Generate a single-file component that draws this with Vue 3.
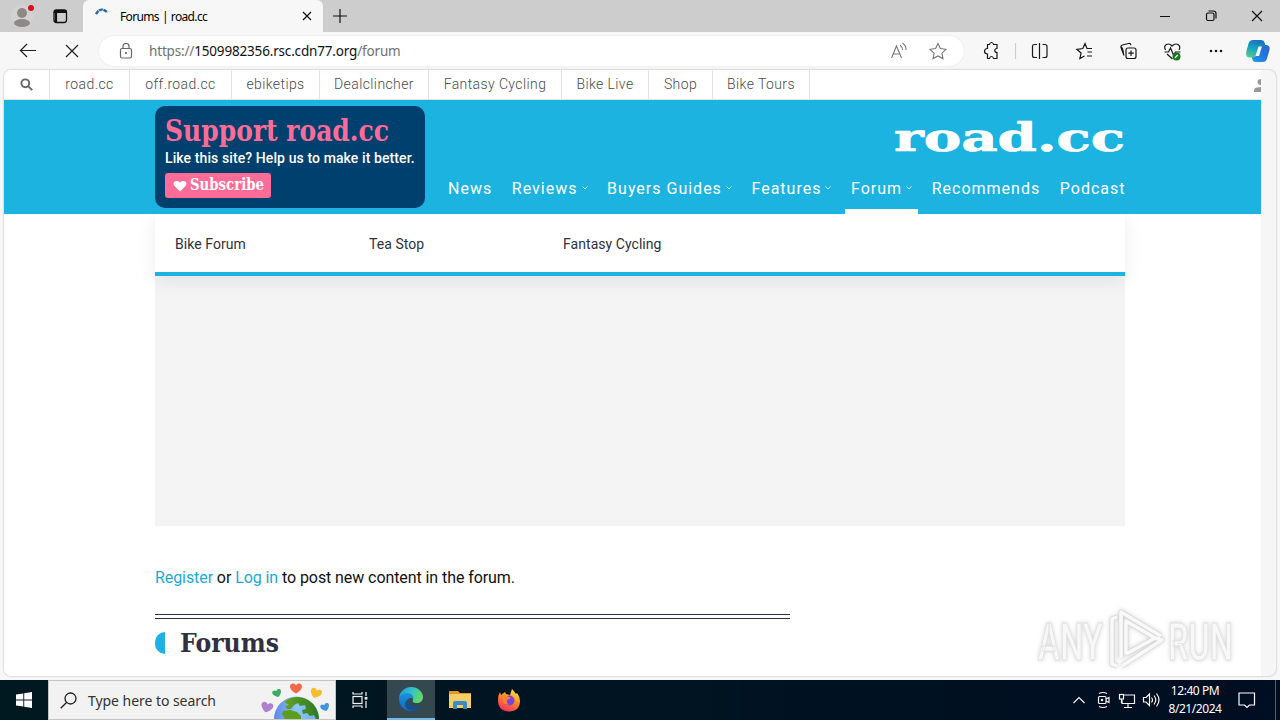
<template>
  <div class="screen">
    <div class="tab-strip">
      <svg class="profile" width="83" height="32" viewBox="0 0 83 32" fill="none">
        <circle cx="22" cy="16" r="11" fill="#d4d2d0" />
        <circle cx="22" cy="13" r="5" fill="#8e8986" />
        <ellipse cx="22" cy="23" rx="8" ry="4" fill="#8e8986" />
        <circle cx="31" cy="8" r="3" fill="#e00b1c" />
        <rect x="54" y="10" width="12.5" height="12.5" rx="2.5" stroke="#111" stroke-width="1.3" />
        <path d="M54 11.500h12.500" stroke="#111" stroke-width="3" />
        <path d="M56 11v11" stroke="#111" stroke-width="2.2" />
      </svg>
      <div class="tab">
        <svg width="16" height="16" viewBox="0 0 16 16" fill="none">
          <path d="M1 6Q6-2 12.500 4.500" stroke="#2868a4" stroke-width="2.4" stroke-dasharray="4 .6" />
        </svg>
        <span class="tab-title">Forums | road.cc</span>
        <svg width="10" height="10" viewBox="0 0 10 10" stroke="#111" stroke-width="1.2"><path d="M1 1l8 8M9 1L1 9" /></svg>
      </div>
      <svg class="new-tab" width="14" height="14" viewBox="0 0 14 14" stroke="#111" stroke-width="1.2"><path d="M7 0v14M0 7h14" /></svg>
      <svg class="window-buttons" width="120" height="32" viewBox="0 0 120 32" fill="none" stroke="#111" stroke-width="1.2">
        <path d="M0 16.5h10M92 11l10 10M102 11L92 21" />
        <rect x="46.5" y="13" width="7.5" height="7.5" rx="1.5" />
        <path d="M48.5 11h5a2.500 2.500 0 0 1 2.500 2.500v5" />
      </svg>
    </div>

    <div class="toolbar">
      <svg class="nav-buttons" width="99" height="37" viewBox="0 0 99 37" fill="none" stroke="#222" stroke-width="1.2">
        <path d="M36 18.5H20.5M27 12l-6.5 6.5L27 25M66 13l12 12M78 13L66 25" />
      </svg>
      <div class="address">
        <svg width="14" height="16" viewBox="0 0 14 16" fill="none" stroke="#686868" stroke-width="1.2">
          <rect x="1.5" y="5.5" width="11" height="9.5" rx="1.5" /><path d="M4 5.500V3.500a3 3 0 0 1 6 0v2" /><circle cx="7" cy="10" r=".5" />
        </svg>
        <span class="url">https://<b>1509982356.rsc.cdn77.org</b>/forum</span>
        <svg width="62" height="20" viewBox="0 0 62 20" fill="none" stroke="#777" stroke-width="1.1">
          <path d="M1.500 17L6.500 5l5 12M3.500 13h6M10 4q2.500 2 2.500 5M12.500 2q4 3 3.500 7" />
          <path d="M48 2.500l2.400 5.100 5.600.7-4.100 3.800 1.100 5.500-5-2.700-5 2.700 1.100-5.500L40 8.300l5.600-.7z" />
        </svg>
      </div>
      <svg width="316" height="37" viewBox="964 32 316 37" fill="none" stroke="#181818" stroke-width="1.200">
        <path d="M987.500 44.500h2q.3-2 2-2t2 2h3.500v4q-2.200 0-2.200 2t2.200 2v6h-3.500q-.3-2-2-2t-2 2h-2V54q-3-.2-3-2.800t3-2.700z" />
        <path d="M1015.500 43v16" stroke="#cfcfcf" />
        <path d="M1037 44.500h-2.500q-2 0-2 2v9q0 2 2 2h2.500M1042.500 44.500h2.500q2 0 2 2v9q0 2-2 2h-2.500M1039.500 43v16" />
        <path d="M1092 48.500h-5l-2-5-2.200 5-6 .8 4.300 3.700-1.200 5.500 4.600-2.500M1087.500 52h4.500M1087 56h5" />
        <rect x="1126" y="48" width="10" height="10.500" rx="2" /><path d="M1131 50.500v5.500M1128.300 53.200h5.500M1124 55.500l-3-8q-.5-2 1.500-2.500l6-1.500q2-.4 2.500 1.500M1121 47q2 0 2.500 7" />
        <path d="M1165.500 50q-2-4 1-5.500 3-1.500 5.500 1.500 3-3 6-1.500 3 2 1 5.500M1167 54l5.500 5M1164.500 52h4l2-4 3 7 2-3h5" />
        <circle cx="1176.500" cy="56.500" r="4" fill="#16781b" stroke="none" /><path d="M1174.800 58l3-3" stroke="#fff" />
        <g fill="#181818" stroke="none"><circle cx="1211" cy="51" r="1.300" /><circle cx="1216" cy="51" r="1.300" /><circle cx="1221" cy="51" r="1.300" /></g>
        <g stroke="none">
          <path d="M1261 45h4.500q5 0 4 5l-2.500 8.500q-1 3.500-4.500 3.500h-7q-2.500 0-3.300-3l-.7-3h4z" fill="url(#copilotB)" />
          <path d="M1253 40h8.500q2.500 0 3.200 2.800l.8 3.200h-3q-3 0-4 3l-2 6q-.8 2.500-3.500 2.500h-3q-5 0-3.700-5.500l2.200-8.500q1-3.500 4.500-3.500z" fill="url(#copilotA)" />
          <path d="M1258.500 46.500h3.500l-3 9.500h-3.500z" fill="#f7fbfb" />
        </g>
        <defs>
          <linearGradient id="copilotA" x1="0.3" y1="0" x2="0" y2="1"><stop stop-color="#1878bd" /><stop offset=".45" stop-color="#19a6c0" /><stop offset="1" stop-color="#5fcf80" /></linearGradient>
          <linearGradient id="copilotB" x1="1" y1="0" x2="0" y2="1"><stop stop-color="#2467cf" /><stop offset=".5" stop-color="#2277e0" /><stop offset="1" stop-color="#1aa0f0" /></linearGradient>
        </defs>
      </svg>
    </div>

    <div class="viewport">
      <div class="page">
        <nav class="network">
          <div class="search-cell">
            <svg width="13" height="13" viewBox="0 0 13 13" fill="none" stroke="#666" stroke-width="1.900"><circle cx="5.300" cy="5.300" r="3.900" /><path d="M8.200 8.200l4 4" /></svg>
          </div>
          <a v-for="site in sites" :key="site.name" :style="{ width: site.width + 'px' }">{{ site.name }}</a>
          <svg class="user" width="8" height="13" viewBox="0 0 8 13" fill="#999"><path d="M8 0v6Q4.500 6 4.500 3T8 0zM8 8v5H1V11q0-2 3-2.500z" /></svg>
        </nav>

        <header class="site-header">
          <div class="wrap header-row">
            <section class="support">
              <svg class="support-title" width="226" height="36"><text x="0" y="28" textLength="224" lengthAdjust="spacingAndGlyphs">Support road.cc</text></svg>
              <p>Like this site? Help us to make it better.</p>
              <button>
                <svg width="14" height="12" viewBox="0 0 14 12" fill="#fff"><path d="M7 11.500L1.500 6C-.2 4.200.5 1.200 3.300 1 5 .9 6.200 1.600 7 2.600 7.800 1.600 9 .9 10.700 1c2.800.2 3.500 3.200 1.800 5z" /></svg>
                <svg class="subscribe" width="76" height="25"><text x="0" y="17" textLength="74" lengthAdjust="spacingAndGlyphs">Subscribe</text></svg>
              </button>
            </section>
            <div class="header-right">
              <svg class="logo" width="231" height="44"><text x="0" y="36" textLength="231" lengthAdjust="spacingAndGlyphs">road.cc</text></svg>
              <nav class="main-nav">
                <a v-for="item in menu" :key="item.name" :class="{ active: item.active }">
                  {{ item.name }}<svg v-if="item.more" width="6" height="4" viewBox="0 0 6 4" fill="none" stroke="#cff4ff"><path d="M.5.5L3 3 5.500.5" /></svg>
                </a>
              </nav>
            </div>
          </div>
        </header>

        <div class="wrap submenu">
          <a v-for="link in forumLinks" :key="link">{{ link }}</a>
        </div>
        <div class="wrap ad-slot"></div>
        <main class="wrap">
          <p class="login"><a>Register</a> or <a>Log in</a> to post new content in the forum.</p>
          <div class="title">
            <i></i>
            <svg width="101" height="40"><text x="0" y="29" textLength="99" lengthAdjust="spacingAndGlyphs">Forums</text></svg>
          </div>
        </main>
      </div>
      <svg class="watermark" width="204" height="70" viewBox="1034 606 204 70">
        <g class="wm-text">
          <text x="1038" y="660" textLength="65" lengthAdjust="spacingAndGlyphs">ANY</text>
          <text x="1168" y="660" textLength="65" lengthAdjust="spacingAndGlyphs">RUN</text>
        </g>
        <g fill="none" stroke-linejoin="round">
          <path v-for="line in watermarkLines" :key="line.color" d="M1117 617l-5 2v45l5 2M1121 658v-46l40 24M1126 654v-33l29 17 7 2-40 26M1126 654l29-16" :stroke="line.color" :stroke-width="line.width" />
        </g>
      </svg>
    </div>

    <div class="taskbar">
      <div class="start">
        <svg width="16" height="16" viewBox="0 0 16 16" fill="#fff"><path d="M0 2.500l7.300-1v6H0zM8.200 1.300L16 0v7.500H8.200zM0 8.500h7.300v6L0 13.500zM8.200 8.500H16V16l-7.800-1.300z" /></svg>
      </div>
      <div class="search">
        <svg width="17" height="17" viewBox="0 0 17 17" fill="none" stroke="#202020" stroke-width="1.300"><circle cx="10.500" cy="6.500" r="5.500" /><path d="M6.500 10.500L.7 16.300" /></svg>
        <span>Type here to search</span>
        <svg class="globe" width="72" height="38" viewBox="260 681 72 38">
          <defs>
            <linearGradient id="sea"><stop stop-color="#5d86e8" /><stop offset=".5" stop-color="#8cc6fb" /><stop offset="1" stop-color="#6aaeea" /></linearGradient>
            <linearGradient id="land"><stop stop-color="#67a31f" /><stop offset="1" stop-color="#2f7a22" /></linearGradient>
          </defs>
          <circle cx="296.500" cy="719" r="22.500" fill="url(#sea)" />
          <path d="M284 702q6-5 14-5 12 1 18 11 3 5 3 11h-3l-2-4-4 1-3-3-4 1-1-4 4-1-1-4-5 1-2-3-4 2-3 4-4 0-2-3 4-1z" fill="url(#land)" />
          <path d="M283 711l7-1 7 2 4 4v3h-16l-3-5z" fill="#5c9c1f" />
          <path v-for="heart in hearts" :key="heart.color" d="M0 5.500C-3 4-6 1-6-1.500-6-5-1.500-5.500 0-2.500 1.500-5.500 6-5 6-1.500 6 1 3 4 0 5.500z" :fill="heart.color" :transform="heart.at" />
        </svg>
      </div>
      <div class="app task-view">
        <svg width="18" height="18" viewBox="0 0 18 18" fill="none" stroke="#f4f4f4" stroke-width="1.200"><rect x="2" y="5.500" width="9" height="7" /><path d="M2 1v2h9V1M2 17v-2h9v2M15 1v4M15 10v7" /><rect x="14.300" y="6.500" width="1.500" height="1.500" /></svg>
      </div>
      <div class="app edge">
        <svg width="24" height="24" viewBox="0 0 24 24">
          <defs>
            <linearGradient id="edgeTop" y2=".4"><stop stop-color="#1f8fd6" /><stop offset=".5" stop-color="#2fc0cf" /><stop offset="1" stop-color="#62d868" /></linearGradient>
            <linearGradient id="edgeSide" x2="0" y2="1"><stop stop-color="#1b93dc" /><stop offset="1" stop-color="#1266be" /></linearGradient>
          </defs>
          <path d="M0 11C1 4 6 0 12 0c7 0 12 5 12 10 0 4-3 6-6 6-4 0-5-1-4-3 1-4-2-6-5-6-4 0-7 1-9 4z" fill="url(#edgeTop)" />
          <path d="M0 11c1-3 5-5 8-5 4 0 7 3 6 6-2-2-5-1-5 2 0 5 4 8 9 8q-3 2-6 2C5 24 0 19 0 11z" fill="url(#edgeSide)" />
          <path d="M10 11.500c-3 5 1 8.500 6 8 3 0 5-1 6-2-3 6-9 7.500-13 5-4-3-4-8 1-11z" fill="#14508f" />
        </svg>
      </div>
      <div class="app">
        <svg width="22" height="20" viewBox="0 0 22 20"><path d="M0 1h9l2 2h11v15H0z" fill="#dc982c" /><path d="M0 4h22v14H0z" fill="#f7cd68" /><path d="M4 19v-6q0-2 2-2h10q2 0 2 2v6h-4v-4H8v4z" fill="#388bc8" /></svg>
      </div>
      <div class="app">
        <svg width="24" height="24" viewBox="0 0 24 24">
          <defs><linearGradient id="fox" x1=".8" y1="0" x2=".3" y2="1"><stop stop-color="#fff04c" /><stop offset=".45" stop-color="#ff8f25" /><stop offset="1" stop-color="#f72b5f" /></linearGradient></defs>
          <path d="M3 4l1 3 4-3 1 2 4 1 2-6q2 2 4 5l1-1q3 4 3 8 0 10-11 10.500Q1 23 1 12q0-5 2-8z" fill="url(#fox)" />
          <circle cx="12.500" cy="12.500" r="5" fill="#7745d7" /><path d="M4 9q4-3 8 0l2 1-4 2q-1 4 3 4-7 2-7-5z" fill="#ff8330" />
        </svg>
      </div>
      <div class="tray">
        <svg width="92" height="22" viewBox="1070 689 92 22" fill="none" stroke="#f4f4f4" stroke-width="1.200">
          <path d="M1073.500 703l5.500-5.500 5.500 5.500" />
          <rect x="1098.500" y="696.500" width="7.500" height="7" rx="1" /><path d="M1106 699l3-1.500v5l-3-1.500M1099 693.500q4-2 8 0M1099 706.500q4 2 8 0" /><circle cx="1102" cy="700" r=".7" />
          <path d="M1124 695h10.500v8.500H1122V700M1128 704v3M1124 707.500h8" /><rect x="1119.500" y="694.500" width="4" height="4.500" /><path d="M1121.500 699v4" />
          <path d="M1143.500 697.500h2.500l3.500-3.500v11.500l-3.500-3.500h-2.500zM1151.500 697.500q2 2.500 0 5M1154 695.500q3.500 4.500 0 9M1156.500 693.500q5 6.500 0 13" />
        </svg>
        <div class="clock"><span>12:40 PM</span><span>8/21/2024</span></div>
        <svg class="notice" width="18" height="17" viewBox="0 0 18 17" fill="none" stroke="#fff" stroke-width="1.200"><path d="M1 1h15.500v12h-5l-2.500 2.500L6.500 13H1z" /></svg>
        <i class="show-desktop"></i>
      </div>
    </div>
  </div>
</template>

<script setup>
const sites = [
  { name: 'road.cc', width: 80 },
  { name: 'off.road.cc', width: 102 },
  { name: 'ebiketips', width: 88 },
  { name: 'Dealclincher', width: 109 },
  { name: 'Fantasy Cycling', width: 133 },
  { name: 'Bike Live', width: 87 },
  { name: 'Shop', width: 64 },
  { name: 'Bike Tours', width: 97 }
];

const menu = [
  { name: 'News' },
  { name: 'Reviews', more: true },
  { name: 'Buyers Guides', more: true },
  { name: 'Features', more: true },
  { name: 'Forum', more: true, active: true },
  { name: 'Recommends' },
  { name: 'Podcast' }
];

const forumLinks = ['Bike Forum', 'Tea Stop', 'Fantasy Cycling'];

// grey edge first, light fill on top
const watermarkLines = [
  { color: '#dadada', width: 5 },
  { color: '#f9f9f9', width: 3.4 }
];

const hearts = [
  { color: '#b07fd2', at: 'translate(267 707) rotate(15)' },
  { color: '#3cab63', at: 'translate(277 693) rotate(-20) scale(.75)' },
  { color: '#f26849', at: 'translate(296 688)' },
  { color: '#f7bd2e', at: 'translate(316 693) rotate(20) scale(.95)' },
  { color: '#3f95dc', at: 'translate(325 707) rotate(-20) scale(.75)' }
];
</script>

<style>
body {
  margin: 0;
}
</style>

<style scoped>
.screen {
  width: 1280px;
  height: 720px;
  overflow: hidden;
  display: flex;
  flex-direction: column;
  background: #f7f7f7;
  font-family: "Noto Sans", "Open Sans", sans-serif;
}

.screen * {
  box-sizing: border-box;
}

svg {
  display: block;
  flex-shrink: 0;
}

p {
  margin: 0;
}

.tab-strip {
  height: 32px;
  display: flex;
  align-items: center;
  background: #cdcdcd;
}

.tab {
  width: 240px;
  height: 32px;
  padding: 0 11px 0 12px;
  display: flex;
  align-items: center;
  background: #f7f7f7;
  border-radius: 6px 6px 0 0;
}

.tab-title {
  flex: 1;
  margin-left: 9px;
  font-size: 12px;
  letter-spacing: -0.65px;
  word-spacing: 0.5px;
  white-space: nowrap;
}

.new-tab {
  margin-left: 10px;
}

.window-buttons {
  margin-left: auto;
}

.toolbar {
  height: 37px;
  display: flex;
  align-items: center;
}

.address {
  width: 865px;
  height: 30px;
  padding: 0 12px 0 20px;
  display: flex;
  align-items: center;
  background: #fff;
  border-radius: 15px;
  box-shadow: 0 0 2px rgba(0, 0, 0, 0.1);
}

.url {
  flex: 1;
  margin-left: 16px;
  color: #717171;
  font-size: 13.5px;
  letter-spacing: -0.17px;
}

.url b {
  color: #111;
  font-weight: 400;
}

.viewport {
  position: relative;
  width: 1272px;
  height: 606px;
  margin: 1px 0 4px 4px;
  flex-shrink: 0;
  overflow: hidden;
  background: #f6f6f6;
  border-radius: 7px;
  box-shadow: 0 0 2px rgba(0, 0, 0, 0.35);
}

.page {
  width: 1257px;
  height: 607px;
  background: #fff;
  font-family: Roboto, sans-serif;
}

.network {
  height: 30px;
  display: flex;
  align-items: stretch;
  border-bottom: 1px solid #e2e2e2;
}

.search-cell {
  width: 46px;
  display: flex;
  align-items: center;
  justify-content: center;
  border-right: 1px solid #e2e2e2;
}

.network a {
  border-right: 1px solid #e2e2e2;
  color: #4c4c4c;
  font-size: 14px;
  font-weight: 300;
  letter-spacing: 0.4px;
  line-height: 28px;
  text-align: center;
}

.user {
  margin: 9px 0 0 auto;
}

.site-header {
  height: 114px;
  background: #1cb3e0;
}

.wrap {
  width: 970px;
  margin-left: 151px;
}

.header-row {
  height: 114px;
  padding-top: 6px;
  display: flex;
}

.support {
  width: 270px;
  height: 102px;
  padding: 7px 10px;
  background: #00406e;
  border-radius: 10px;
}

.support-title,
.subscribe,
.title svg {
  overflow: visible;
  font-family: "DejaVu Serif", serif;
  font-weight: 700;
}

.support-title {
  fill: #ff6c98;
  font-size: 29px;
}

.support p {
  margin-top: 1px;
  color: #fff;
  font-size: 14px;
  font-weight: 500;
  letter-spacing: 0.1px;
  line-height: 16px;
  white-space: nowrap;
}

.support button {
  width: 106px;
  height: 25px;
  margin-top: 7px;
  padding: 0 8px;
  display: flex;
  align-items: center;
  gap: 3px;
  background: #ff6c98;
  border: 0;
  border-radius: 3px;
}

.subscribe {
  fill: #fff;
  font-size: 17px;
}

.header-right {
  flex: 1;
  display: flex;
  flex-direction: column;
  align-items: flex-end;
}

.logo {
  margin-top: 9px;
  overflow: visible;
  fill: #fff;
  stroke: #fff;
  stroke-width: 0.7px;
  font-family: "DejaVu Serif", serif;
  font-size: 40px;
  font-weight: 700;
}

.main-nav {
  height: 50px;
  margin-top: 5px;
  display: flex;
  gap: 7.6px;
  margin-right: -6.5px;
}

.main-nav a {
  padding: 3px 6px 0;
  display: flex;
  align-items: center;
  gap: 4px;
  color: #fff;
  font-size: 16px;
  letter-spacing: 1px;
  white-space: nowrap;
  border-bottom: 5px solid transparent;
}

.main-nav a.active {
  border-bottom-color: #fff;
}

.submenu {
  position: relative;
  height: 62px;
  padding: 0 20px;
  display: flex;
  background: #fff;
  border-bottom: 4px solid #1cb3e0;
  box-shadow: 0 5px 18px rgba(0, 0, 0, 0.08);
  clip-path: inset(0 -30px -40px -30px);
}

.submenu a {
  width: 194px;
  color: #30303f;
  font-size: 14px;
  letter-spacing: 0.05px;
  line-height: 60px;
}

.ad-slot {
  height: 250px;
  background: #f4f4f4;
}

.login {
  padding-top: 41px;
  height: 88px;
  color: #111;
  font-size: 16px;
  letter-spacing: -0.08px;
  line-height: 21px;
}

.login a {
  color: #1ca9d2;
}

.title {
  width: 635px;
  padding-top: 8px;
  border-top: 1px solid #2c2c3c;
  background: linear-gradient(#2c2c3c, #2c2c3c) 0 3px / 100% 1px no-repeat;
  display: flex;
  align-items: center;
  fill: #2f3040;
  font-size: 25.5px;
}

.title i {
  width: 10px;
  height: 22px;
  margin-right: 15px;
  background: #1cb3e0;
  border-radius: 11px 0 0 11px;
}

.watermark {
  position: absolute;
  left: 1030px;
  top: 536px;
  overflow: visible;
  filter: drop-shadow(0 0 2px rgba(0, 0, 0, 0.18));
}

.wm-text {
  fill: #f8f8f8;
  stroke: #e0e0e0;
  stroke-width: 0.8px;
  font-family: Roboto, sans-serif;
  font-size: 51px;
  font-weight: 500;
}

.taskbar {
  height: 40px;
  display: flex;
  flex-shrink: 0;
  background: linear-gradient(90deg, #001820, #001421 50%, #000d22);
}

.start,
.app {
  width: 49px;
  display: flex;
  align-items: center;
  justify-content: center;
}

.start {
  width: 48px;
}

.search {
  width: 288px;
  padding-left: 11px;
  display: flex;
  align-items: center;
  background: #f2f2f2;
  border: 1px solid #c5c5c5;
}

.search span {
  flex: 1;
  margin-left: 11px;
  color: #333;
  font-size: 14px;
  letter-spacing: -0.05px;
}

.globe {
  margin-right: 3px;
}

.task-view {
  width: 51px;
  padding-right: 3px;
}

.edge {
  width: 48px;
  background: #36484f;
  border-bottom: 2px solid #76b9e7;
}

.tray {
  margin-left: auto;
  display: flex;
  align-items: center;
}

.clock {
  width: 66px;
  display: flex;
  flex-direction: column;
  align-items: center;
  color: #fff;
  font-size: 12px;
  letter-spacing: -0.45px;
  line-height: 18px;
}

.notice {
  margin: 0 19px 0 10px;
}

.show-desktop {
  width: 5px;
  height: 40px;
  border-left: 1px solid #56606d;
}
</style>
